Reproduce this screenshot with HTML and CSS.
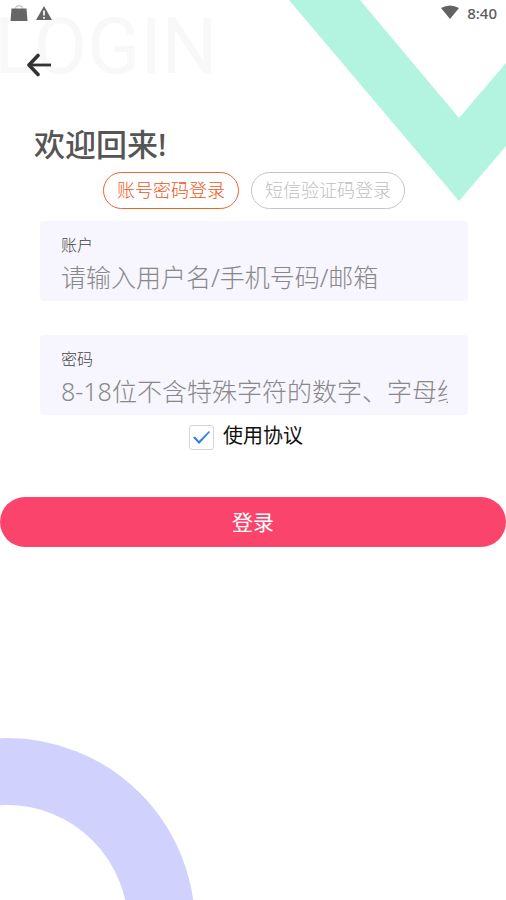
FILE: index.html
```html
<!DOCTYPE html>
<html lang="zh-CN">
<head>
  <meta charset="utf-8">
  <meta name="viewport" content="width=device-width, initial-scale=1">
  <title>登录</title>
  <link rel="stylesheet" href="styles.css">
</head>
<body>
  <div class="screen">
    <div class="watermark" aria-hidden="true">LOGIN</div>
    <svg class="chevron" width="226" height="210" viewBox="0 0 226 210" aria-hidden="true">
      <path d="M9 0H80L179 118L226 63V146L179 201Z" fill="#b3f4e1"/>
    </svg>
    <svg class="ring" width="196" height="162" viewBox="0 0 196 162" aria-hidden="true">
      <circle cx="7" cy="188" r="154.5" fill="none" stroke="#d1d1fe" stroke-width="67"/>
    </svg>

    <header class="status">
      <div class="status-group">
        <svg width="18" height="18" viewBox="0 0 18 18" aria-hidden="true">
          <path d="M5.5 5C6 .5 12 .5 12.500 5" fill="none" stroke="#c4c4c4" stroke-width="1.300"/>
          <path d="M1.500 4.500H16.500L17.500 17H.5Z" fill="#666"/>
        </svg>
        <svg width="16" height="18" viewBox="0 0 16 18" aria-hidden="true">
          <path d="M8 2L16 16H0Z" fill="#666"/>
          <path d="M8 6.500V11.500M8 13V14.800" stroke="#fff" stroke-width="1.700"/>
        </svg>
      </div>
      <div class="status-group">
        <svg width="18" height="18" viewBox="0 0 18 18" aria-hidden="true">
          <path d="M0 4Q9 -1 18 4L9 15Z" fill="#626262"/>
        </svg>
        <time class="clock">8:40</time>
      </div>
    </header>

    <button class="back" type="button" aria-label="返回">
      <svg width="26" height="24" viewBox="0 0 26 24" aria-hidden="true">
        <path d="M12 2.500L3 12L12 21.500" fill="none" stroke="#333" stroke-width="3.600" stroke-linecap="round" stroke-linejoin="round"/>
        <path d="M3 12H25" stroke="#333" stroke-width="2.800"/>
      </svg>
    </button>

    <main>
      <h1 class="title">欢迎回来!</h1>
      <div class="modes">
        <button class="mode mode-active" type="button">账号密码登录</button>
        <button class="mode" type="button">短信验证码登录</button>
      </div>
      <form>
        <div class="field">
          <label for="account">账户</label>
          <input id="account" type="text" placeholder="请输入用户名/手机号码/邮箱">
        </div>
        <div class="field">
          <label for="password">密码</label>
          <input id="password" type="password" placeholder="8-18位不含特殊字符的数字、字母组合">
        </div>
        <div class="agree">
          <input id="agree" type="checkbox" checked>
          <label for="agree">使用协议</label>
        </div>
        <button class="submit" type="submit">登录</button>
      </form>
    </main>
  </div>
</body>
</html>
```
FILE: styles.css
```css
* {
  box-sizing: border-box;
}

body {
  margin: 0;
  background: #fff;
}

body,
button,
input {
  font-family: "Noto Sans", "Noto Sans CJK SC", sans-serif;
}

.screen {
  position: relative;
  min-height: 100vh;
  overflow: hidden;
}

.watermark {
  position: absolute;
  top: 0;
  left: -6px;
  font: 400 78px/94px Roboto, sans-serif;
  color: #f8f8f8;
}

.chevron {
  position: absolute;
  top: 0;
  right: 0;
}

.ring {
  position: absolute;
  bottom: 0;
  left: 0;
}

.status,
.back,
main {
  position: relative;
}

.status {
  display: flex;
  justify-content: space-between;
  padding: 4px 9px 0 10px;
}

.status-group {
  display: flex;
  align-items: center;
  gap: 8px;
}

.clock {
  font-size: 15px;
  font-weight: 500;
  line-height: 18px;
  color: #5c5c5c;
}

.back {
  display: block;
  margin: 31px 0 0 26px;
  padding: 0;
  border: 0;
  background: none;
}

.back svg {
  display: block;
}

.title {
  margin: 47px 34px 8px;
  font-size: 31px;
  font-weight: 500;
  line-height: 40px;
  color: #555;
}

.modes {
  display: flex;
  justify-content: center;
  gap: 12px;
  margin: 0 0 12px 2px;
}

.mode {
  height: 37px;
  padding: 0 13px 1px;
  border: 1px solid #c4c4c4;
  border-radius: 19px;
  background: #fff;
  font-size: 18px;
  font-weight: 300;
  line-height: 34px;
  color: #c0c0c0;
}

.mode-active {
  border-color: #f0622d;
  color: #ee5518;
}

.field {
  margin: 0 38px 34px 40px;
  padding: 12px 20px 4px 21px;
  border-radius: 4px;
  background: #f7f5fd;
}

.field label {
  display: block;
  font-size: 16px;
  font-weight: 300;
  line-height: 24px;
  color: #444;
}

.field input {
  display: block;
  width: 100%;
  height: 40px;
  padding: 0;
  border: 0;
  background: none;
  font-size: 25px;
  font-weight: 300;
  color: #333;
}

.field input::placeholder {
  color: #888;
  opacity: 1;
}

.agree {
  display: flex;
  justify-content: center;
  gap: 9px;
  margin: -26px 14px 47px 0;
}

.agree input {
  appearance: none;
  width: 25px;
  height: 25px;
  margin: 2px 0 0;
  border: 1px solid #d4d4d4;
  border-radius: 3px;
  background: #fff;
  display: grid;
  place-items: center;
}

.agree input:checked::before {
  content: "";
  width: 17px;
  height: 13px;
  background: #2a7de9;
  clip-path: polygon(0 50%, 12% 42%, 35% 76%, 94% 0, 100% 8%, 36% 100%);
}

.agree label {
  font-size: 20px;
  line-height: 26px;
  color: #111;
}

.submit {
  display: block;
  width: 100%;
  height: 50px;
  padding: 0 0 2px;
  border: 0;
  border-radius: 25px;
  background: #fb446c;
  font-size: 21px;
  color: #fff;
}
```
